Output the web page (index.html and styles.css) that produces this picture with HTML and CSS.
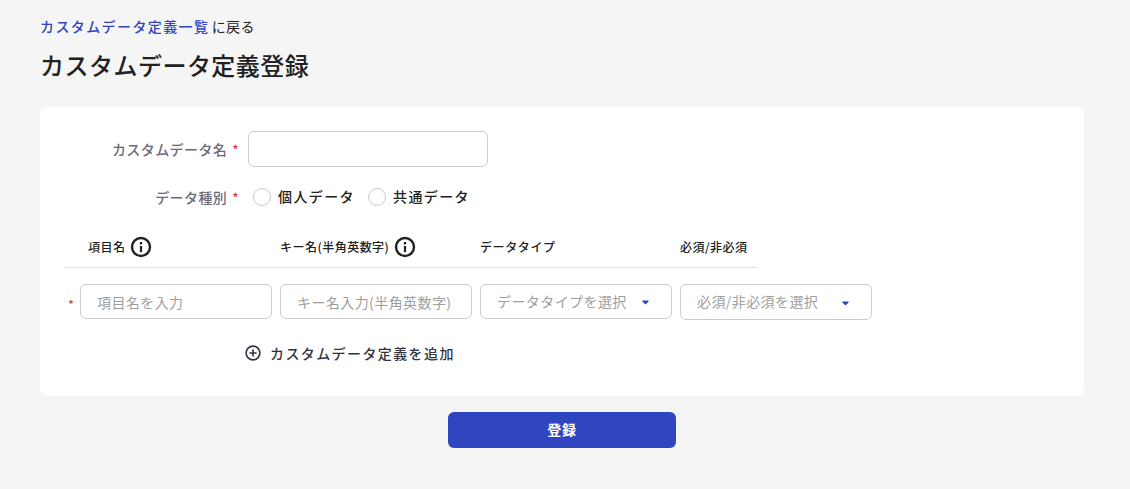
FILE: index.html
```html
<!DOCTYPE html>
<html lang="ja">
<head>
    <meta charset="UTF-8">
    <title>カスタムデータ定義登録</title>
    <link rel="stylesheet" href="styles.css">
</head>
<body>
    <div class="page">
        <p class="breadcrumb"><a href="#">カスタムデータ定義一覧</a> に戻る</p>
        <h1 class="page-title">カスタムデータ定義登録</h1>

        <div class="card">
            <div class="form-row name-row">
                <label class="form-label">カスタムデータ名<span class="req">*</span></label>
                <input type="text" class="input name-input">
            </div>

            <div class="form-row kind-row">
                <label class="form-label">データ種別<span class="req">*</span></label>
                <div class="radio-group">
                    <span class="radio-item"><span class="radio"></span>個人データ</span>
                    <span class="radio-item"><span class="radio"></span>共通データ</span>
                </div>
            </div>

            <div class="table-head">
                <div class="col col-item">項目名
                    <svg class="info" viewBox="0 0 22 22"><circle cx="11" cy="11" r="9" fill="none" stroke="#212121" stroke-width="2.4"/><rect x="9.9" y="10" width="2.2" height="6.2" fill="#212121"/><rect x="9.9" y="6" width="2.2" height="2.4" fill="#212121"/></svg>
                </div>
                <div class="col col-key">キー名(半角英数字)
                    <svg class="info" viewBox="0 0 22 22"><circle cx="11" cy="11" r="9" fill="none" stroke="#212121" stroke-width="2.4"/><rect x="9.9" y="10" width="2.2" height="6.2" fill="#212121"/><rect x="9.9" y="6" width="2.2" height="2.4" fill="#212121"/></svg>
                </div>
                <div class="col col-type">データタイプ</div>
                <div class="col col-must">必須/非必須</div>
            </div>

            <div class="table-row">
                <span class="row-req">*</span>
                <input type="text" class="input cell-input" placeholder="項目名を入力">
                <input type="text" class="input cell-input" placeholder="キー名入力(半角英数字)">
                <div class="input select">データタイプを選択
                    <svg class="caret" viewBox="0 0 8 5"><path d="M1 .3h6c.6 0 .9.6.5 1L4.6 4.3a.8.8 0 0 1-1.2 0L.5 1.3C.1.9.4.3 1 .3z" fill="#3045c0"/></svg>
                </div>
                <div class="input select select-tall">必須/非必須を選択
                    <svg class="caret" viewBox="0 0 8 5"><path d="M1 .3h6c.6 0 .9.6.5 1L4.6 4.3a.8.8 0 0 1-1.2 0L.5 1.3C.1.9.4.3 1 .3z" fill="#3045c0"/></svg>
                </div>
            </div>

            <div class="add-row">
                <svg class="add-icon" viewBox="0 0 16 16"><circle cx="8" cy="8" r="6.9" fill="none" stroke="#33333f" stroke-width="1.6"/><path d="M8 4.4v7.2M4.4 8h7.2" stroke="#33333f" stroke-width="1.6" fill="none"/></svg>
                カスタムデータ定義を追加
            </div>
        </div>

        <div class="actions">
            <button class="btn-submit">登録</button>
        </div>
    </div>
</body>
</html>
```

FILE: styles.css
```css
body {
    margin: 0;
    background-color: #f5f5f5;
    color: #212121;
    font-family: "Noto Sans CJK JP", "Noto Sans", sans-serif;
}

.page {
    padding: 15px 46px 41px 40px;
}

.breadcrumb {
    margin: 0;
    font-size: 14px;
    line-height: 22px;
    letter-spacing: 0.02em;
}

.breadcrumb a {
    margin-right: -1px;
    color: #3045c0;
    font-weight: 500;
    text-decoration: none;
    letter-spacing: 0.1em;
}

.page-title {
    margin: 12px 0 0;
    font-size: 24px;
    line-height: 32px;
    font-weight: 500;
    letter-spacing: 0.02em;
}

.card {
    margin-top: 26px;
    padding: 24px 24px 26px;
    height: 239px;
    background: white;
    border-radius: 8px;
}

.form-row {
    display: flex;
    align-items: center;
}

.form-label {
    width: 175px;
    margin-right: 9px;
    text-align: right;
    font-size: 14px;
    font-weight: 500;
    color: #6a6a78;
    letter-spacing: 0.03em;
}

.req {
    margin-left: 5px;
    color: #e0364c;
    font-size: 13px;
}

.input {
    box-sizing: border-box;
    border: 1px solid #cccccc;
    border-radius: 6px;
    background: white;
    font-family: inherit;
    font-size: 14px;
    outline: none;
}

.name-input {
    width: 240px;
    height: 36px;
}

.kind-row {
    margin-top: 12px;
    height: 36px;
}

.radio-group {
    display: flex;
    margin-left: 5px;
    gap: 13px;
}

.radio-item {
    display: flex;
    align-items: center;
    gap: 7px;
    margin-top: -2px;
    font-size: 14px;
    font-weight: 500;
    letter-spacing: 0.1em;
}

.radio {
    box-sizing: border-box;
    width: 18px;
    height: 18px;
    margin-top: 2px;
    border: 1px solid #cccccc;
    border-radius: 50%;
}

.table-head {
    display: flex;
    align-items: center;
    width: 693px;
    height: 41px;
    margin-top: 11px;
    border-bottom: 1px solid #e0e0e0;
    font-size: 12px;
    font-weight: 500;
    letter-spacing: 0.04em;
}

.col {
    display: flex;
    align-items: center;
    gap: 5px;
    box-sizing: border-box;
}

.col-item {
    width: 216px;
    padding-left: 24px;
}

.col-key {
    width: 200px;
}

.col-type {
    width: 200px;
    letter-spacing: 0.05em;
}

.info {
    width: 22px;
    height: 22px;
}

.table-row {
    display: flex;
    align-items: flex-start;
    gap: 8px;
    margin-top: 16px;
}

.row-req {
    width: 4px;
    margin-left: 4px;
    margin-top: 11px;
    color: #e0364c;
    font-size: 13px;
}

.cell-input {
    width: 192px;
    height: 35px;
    padding: 0 16px;
}

.cell-input::placeholder {
    color: #9e9e9e;
    letter-spacing: 0.03em;
}

.select {
    display: flex;
    align-items: center;
    justify-content: space-between;
    width: 192px;
    height: 35px;
    padding: 0 22px 2px 16px;
    color: #9e9e9e;
    letter-spacing: 0.03em;
}

.select-tall {
    height: 36px;
}

.caret {
    width: 7px;
    height: 5px;
    margin-top: 4px;
}

.add-row {
    display: flex;
    align-items: center;
    gap: 9px;
    margin-top: 23px;
    margin-left: 181px;
    font-size: 14px;
    font-weight: 500;
    color: #33333f;
    letter-spacing: 0.1em;
}

.add-icon {
    width: 16px;
    height: 16px;
}

.actions {
    display: flex;
    justify-content: center;
    margin-top: 16px;
}

.btn-submit {
    width: 228px;
    height: 36px;
    padding: 0 0 2px;
    border: none;
    border-radius: 6px;
    background-color: #3045c0;
    color: white;
    font-family: inherit;
    font-size: 14px;
    font-weight: 700;
    letter-spacing: 0.05em;
}
```
